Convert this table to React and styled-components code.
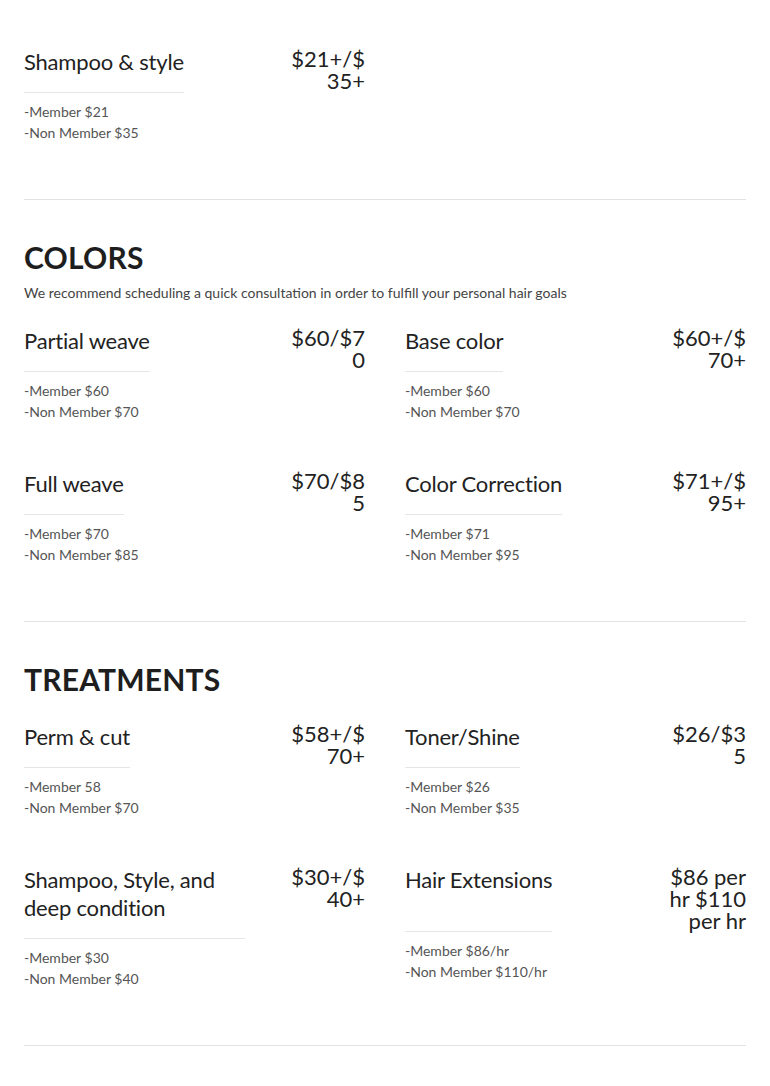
import React from 'react';
import styled, { createGlobalStyle } from 'styled-components';

const GlobalStyle = createGlobalStyle`
  html, body {
    margin: 0;
    padding: 0;
    background: #ffffff;
  }
  body {
    font-family: 'Lato', 'Open Sans', sans-serif;
    color: #222;
  }
`;

const sections = [
  {
    items: [
      { name: 'Shampoo & style', price: '$21+/$35+', lines: ['-Member $21', '-Non Member $35'] },
    ],
  },
  {
    title: 'COLORS',
    note: 'We recommend scheduling a quick consultation in order to fulfill your personal hair goals',
    items: [
      { name: 'Partial weave', price: '$60/$70', lines: ['-Member $60', '-Non Member $70'] },
      { name: 'Base color', price: '$60+/$70+', lines: ['-Member $60', '-Non Member $70'] },
      { name: 'Full weave', price: '$70/$85', lines: ['-Member $70', '-Non Member $85'] },
      { name: 'Color Correction', price: '$71+/$95+', lines: ['-Member $71', '-Non Member $95'] },
    ],
  },
  {
    title: 'TREATMENTS',
    items: [
      { name: 'Perm & cut', price: '$58+/$70+', lines: ['-Member 58', '-Non Member $70'] },
      { name: 'Toner/Shine', price: '$26/$35', lines: ['-Member $26', '-Non Member $35'] },
      { name: 'Shampoo, Style, and deep condition', price: '$30+/$40+', lines: ['-Member $30', '-Non Member $40'] },
      { name: 'Hair Extensions', price: '$86 per hr $110 per hr', lines: ['-Member $86/hr', '-Non Member $110/hr'] },
    ],
  },
];

export default function App() {
  return (
    <Page>
      <GlobalStyle />
      {sections.map((section, i) => (
        <Section key={i} $first={i === 0}>
          {section.title && <Heading $withNote={!!section.note}>{section.title}</Heading>}
          {section.note && <Note>{section.note}</Note>}
          <Grid>
            {section.items.map((item) => (
              <Item key={item.name}>
                <ItemHead>
                  <ItemName>{item.name}</ItemName>
                  <Price>{item.price}</Price>
                </ItemHead>
                <Details>
                  {item.lines.map((line) => (
                    <DetailLine key={line}>{line}</DetailLine>
                  ))}
                </Details>
              </Item>
            ))}
          </Grid>
        </Section>
      ))}
    </Page>
  );
}

const Page = styled.div`
  padding: 0 24px;
  width: 722px;
  min-height: 1086px;
  box-sizing: content-box;
`;

const Section = styled.section`
  padding-top: ${(p) => (p.$first ? '48px' : '39px')};
  padding-bottom: 56px;
  border-bottom: 1px solid #e2e2e2;
`;

const Heading = styled.h2`
  margin: 0 0 ${(p) => (p.$withNote ? '7px' : '26px')};
  font-family: 'Lato', sans-serif;
  font-size: 30px;
  line-height: 36px;
  font-weight: 700;
  letter-spacing: 0.2px;
  color: #1e1e1e;
`;

const Note = styled.p`
  margin: 0 0 24px;
  font-size: 14px;
  line-height: 21px;
  color: #444;
`;

const Grid = styled.div`
  display: grid;
  grid-template-columns: 341px 341px;
  column-gap: 40px;
  row-gap: 48px;
`;

const Item = styled.div`
  display: flex;
  flex-direction: column;
`;

const ItemHead = styled.div`
  display: flex;
  align-items: stretch;
  justify-content: space-between;
  gap: 43px;
`;

const ItemName = styled.h3`
  flex: 0 1 auto;
  margin: 0;
  padding-bottom: 16px;
  border-bottom: 1px solid #e6e6e6;
  font-size: 22px;
  line-height: 28px;
  font-weight: 400;
  letter-spacing: -0.2px;
  color: #222;
`;

const Price = styled.div`
  flex: 0 0 77px;
  width: 77px;
  font-size: 22px;
  line-height: 22px;
  text-align: right;
  overflow-wrap: anywhere;
  color: #222;
`;

const Details = styled.div`
  margin-top: 8px;
`;

const DetailLine = styled.div`
  font-size: 14px;
  line-height: 21px;
  color: #555;
`;
